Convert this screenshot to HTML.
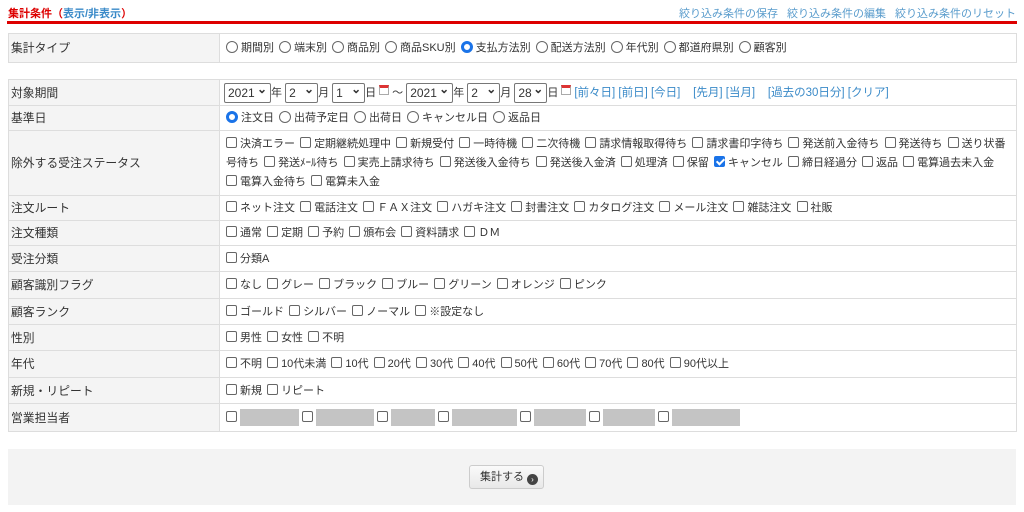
<!DOCTYPE html>
<html><head><meta charset="utf-8"><style>
*{box-sizing:border-box;margin:0;padding:0}
body{width:1024px;height:512px;background:#fff;font-family:"Liberation Sans","Noto Sans CJK JP",sans-serif;font-size:11px;color:#333;position:relative;overflow:hidden}
.title{position:absolute;left:8px;top:5px;color:#d00;font-weight:bold;font-size:11px}
.title a{color:#3a8ac8}
.links{position:absolute;right:8px;top:5px;color:#5a9ccc;font-size:11px;word-spacing:0}
.links span{margin-left:9px}
.redline{position:absolute;left:7px;top:21px;width:1010px;height:3px;background:#d00}
table{position:absolute;left:8px;width:1009px;border-collapse:collapse;font-size:11px}
td{border:1px solid #ddd;padding:0 6px;vertical-align:middle;line-height:18px;word-spacing:2px}
td.l{background:#f4f4f4;width:211px;padding-left:2px;font-size:11.8px;word-spacing:0}
.cb{display:inline-block;width:11px;height:11px;border:1px solid #666;border-radius:2px;vertical-align:-1px;margin-right:3px;background:#fff}
.cb.on{background:#1a73e8;border-color:#1a73e8;position:relative}
.cb.on:after{content:"";position:absolute;left:3px;top:0px;width:3px;height:6px;border:solid #fff;border-width:0 2px 2px 0;transform:rotate(45deg)}
.rd{display:inline-block;width:12px;height:12px;border:1px solid #666;border-radius:50%;vertical-align:-2px;margin-right:3px}
.rd.on{border:3.5px solid #1a73e8}
.it{margin-right:5px}
.sel{display:inline-block;height:20px;border:1px solid #777;border-radius:2px;padding:0 3px;line-height:18px;vertical-align:middle;font-size:12px;position:relative;word-spacing:0}
.sel:after{content:"⌄";position:absolute;right:3px;top:-4px;font-weight:bold}
.cal{display:inline-block;width:10px;height:10px;border:1px solid #aaa;border-top:3px solid #d33;vertical-align:0;margin:0 3px}
.lk{color:#3a8ac8;word-spacing:0;font-size:11.5px}
.g{display:inline-block;height:17px;background:#c4c4c4;vertical-align:middle;margin-right:3px}
.bot{position:absolute;left:8px;top:449px;width:1008px;height:56px;background:#f3f3f3}
.btn{position:absolute;left:469px;top:465px;width:75px;height:24px;border:1px solid #ccc;border-radius:3px;background:linear-gradient(#fafafa,#e8e8e8);font-size:11px;line-height:22px;padding-left:10px}
.btn i{display:inline-block;width:11px;height:11px;border-radius:50%;background:#444;vertical-align:-2px;margin-left:3px;color:#fff;font-size:8px;line-height:11px;text-align:center;font-style:normal}
</style></head><body>
<div class="title">集計条件（<a>表示/非表示</a>）</div>
<div class="links"><span>絞り込み条件の保存</span><span>絞り込み条件の編集</span><span>絞り込み条件のリセット</span></div>
<div class="redline"></div>
<table style="top:33px"><tr style="height:29px"><td class="l">集計タイプ</td><td>
<span class="it"><span class="rd"></span>期間別</span><span class="it"><span class="rd"></span>端末別</span><span class="it"><span class="rd"></span>商品別</span><span class="it"><span class="rd"></span>商品SKU別</span><span class="it"><span class="rd on"></span>支払方法別</span><span class="it"><span class="rd"></span>配送方法別</span><span class="it"><span class="rd"></span>年代別</span><span class="it"><span class="rd"></span>都道府県別</span><span class="it"><span class="rd"></span>顧客別</span>
</td></tr></table>
<table style="top:79px">
<tr style="height:26px"><td class="l">対象期間</td><td style="padding-left:4px;word-spacing:0"><span class="sel" style="width:47px">2021</span>年 <span class="sel" style="width:33px">2</span>月 <span class="sel" style="width:33px">1</span>日<span class="cal"></span>～ <span class="sel" style="width:47px">2021</span>年 <span class="sel" style="width:33px">2</span>月 <span class="sel" style="width:33px">28</span>日<span class="cal"></span><span class="lk">[前々日] [前日] [今日] &nbsp;&nbsp; [先月] [当月] &nbsp;&nbsp; [過去の30日分] [クリア]</span></td></tr>
<tr style="height:25px"><td class="l">基準日</td><td><span class="it"><span class="rd on"></span>注文日</span><span class="it"><span class="rd"></span>出荷予定日</span><span class="it"><span class="rd"></span>出荷日</span><span class="it"><span class="rd"></span>キャンセル日</span><span class="it"><span class="rd"></span>返品日</span></td></tr>
<tr style="height:65px"><td class="l">除外する受注ステータス</td><td style="line-height:19px"><span class="cb"></span>決済エラー <span class="cb"></span>定期継続処理中 <span class="cb"></span>新規受付 <span class="cb"></span>一時待機 <span class="cb"></span>二次待機 <span class="cb"></span>請求情報取得待ち <span class="cb"></span>請求書印字待ち <span class="cb"></span>発送前入金待ち <span class="cb"></span>発送待ち <span class="cb"></span>送り状番号待ち <span class="cb"></span>発送ﾒｰﾙ待ち <span class="cb"></span>実売上請求待ち <span class="cb"></span>発送後入金待ち <span class="cb"></span>発送後入金済 <span class="cb"></span>処理済 <span class="cb"></span>保留 <span class="cb on"></span>キャンセル <span class="cb"></span>締日経過分 <span class="cb"></span>返品 <span class="cb"></span>電算過去未入金 <span class="cb"></span>電算入金待ち <span class="cb"></span>電算未入金</td></tr>
<tr style="height:25px"><td class="l">注文ルート</td><td><span class="cb"></span>ネット注文 <span class="cb"></span>電話注文 <span class="cb"></span>ＦＡＸ注文 <span class="cb"></span>ハガキ注文 <span class="cb"></span>封書注文 <span class="cb"></span>カタログ注文 <span class="cb"></span>メール注文 <span class="cb"></span>雑誌注文 <span class="cb"></span>社販</td></tr>
<tr style="height:25px"><td class="l">注文種類</td><td><span class="cb"></span>通常 <span class="cb"></span>定期 <span class="cb"></span>予約 <span class="cb"></span>頒布会 <span class="cb"></span>資料請求 <span class="cb"></span>ＤＭ</td></tr>
<tr style="height:26px"><td class="l">受注分類</td><td><span class="cb"></span>分類A</td></tr>
<tr style="height:27px"><td class="l">顧客識別フラグ</td><td><span class="cb"></span>なし <span class="cb"></span>グレー <span class="cb"></span>ブラック <span class="cb"></span>ブルー <span class="cb"></span>グリーン <span class="cb"></span>オレンジ <span class="cb"></span>ピンク</td></tr>
<tr style="height:26px"><td class="l">顧客ランク</td><td><span class="cb"></span>ゴールド <span class="cb"></span>シルバー <span class="cb"></span>ノーマル <span class="cb"></span>※設定なし</td></tr>
<tr style="height:26px"><td class="l">性別</td><td><span class="cb"></span>男性 <span class="cb"></span>女性 <span class="cb"></span>不明</td></tr>
<tr style="height:27px"><td class="l">年代</td><td><span class="cb"></span>不明 <span class="cb"></span>10代未満 <span class="cb"></span>10代 <span class="cb"></span>20代 <span class="cb"></span>30代 <span class="cb"></span>40代 <span class="cb"></span>50代 <span class="cb"></span>60代 <span class="cb"></span>70代 <span class="cb"></span>80代 <span class="cb"></span>90代以上</td></tr>
<tr style="height:26px"><td class="l">新規・リピート</td><td><span class="cb"></span>新規 <span class="cb"></span>リピート</td></tr>
<tr style="height:28px"><td class="l">営業担当者</td><td style="word-spacing:0"><span class="cb"></span><span class="g" style="width:59px"></span><span class="cb"></span><span class="g" style="width:58px"></span><span class="cb"></span><span class="g" style="width:44px"></span><span class="cb"></span><span class="g" style="width:65px"></span><span class="cb"></span><span class="g" style="width:52px"></span><span class="cb"></span><span class="g" style="width:52px"></span><span class="cb"></span><span class="g" style="width:68px"></span></td></tr>
</table>
<div class="bot"></div>
<div class="btn">集計する<i>›</i></div>
</body></html>
